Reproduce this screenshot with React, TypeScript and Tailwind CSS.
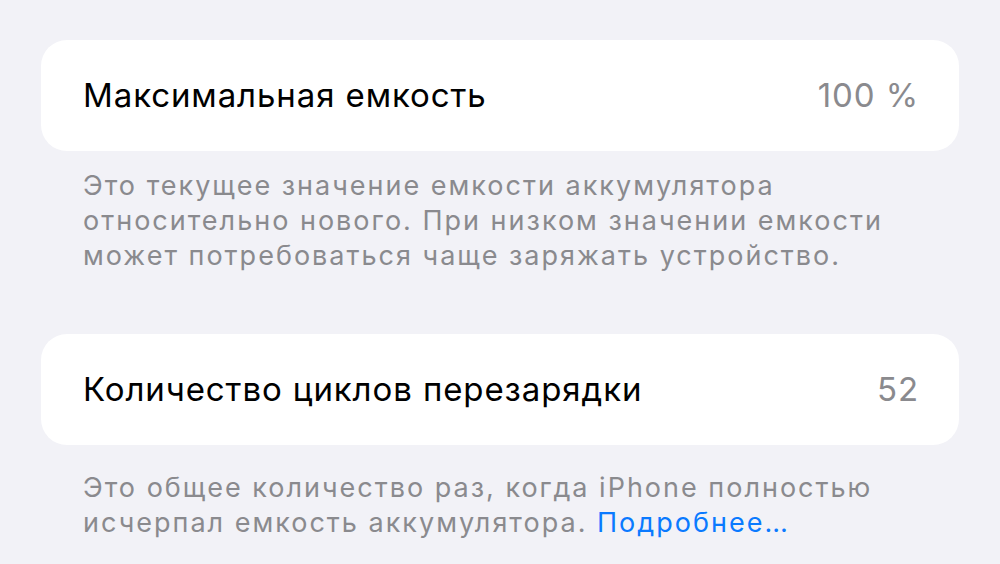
export default function App() {
  return (
    <div
      className="w-[1000px] h-[564px] overflow-hidden bg-[#f2f2f7] px-[41px] pt-[40px]"
      style={{ fontFamily: 'Inter, "Noto Sans", sans-serif' }}
    >
      <div className="h-[111px] rounded-[26px] bg-white flex items-center justify-between pl-[42px] pr-[40px]">
        <span className="text-[33px] text-black tracking-[0.9px]">Максимальная емкость</span>
        <span className="text-[33px] text-[#8a8a8e] tracking-[0.9px]">100 %</span>
      </div>
      <div className="pl-[42px] pr-[10px] mt-[17px] text-[27px] leading-[35px] tracking-[2px] text-[#8a8a8e] whitespace-nowrap">
        Это текущее значение емкости аккумулятора
        <br />
        относительно нового. При низком значении емкости
        <br />
        может потребоваться чаще заряжать устройство.
      </div>
      <div className="mt-[61px] h-[111px] rounded-[26px] bg-white flex items-center justify-between pl-[42px] pr-[40px]">
        <span className="text-[33px] text-black tracking-[0.9px]">Количество циклов перезарядки</span>
        <span className="text-[33px] text-[#8a8a8e] tracking-[0.9px]">52</span>
      </div>
      <div className="pl-[42px] pr-[10px] mt-[25px] text-[27px] leading-[35px] tracking-[2px] text-[#8a8a8e] whitespace-nowrap">
        Это общее количество раз, когда iPhone полностью
        <br />
        исчерпал емкость аккумулятора.{" "}
        <span className="text-[#0a7aff]">Подробнее…</span>
      </div>
    </div>
  );
}
